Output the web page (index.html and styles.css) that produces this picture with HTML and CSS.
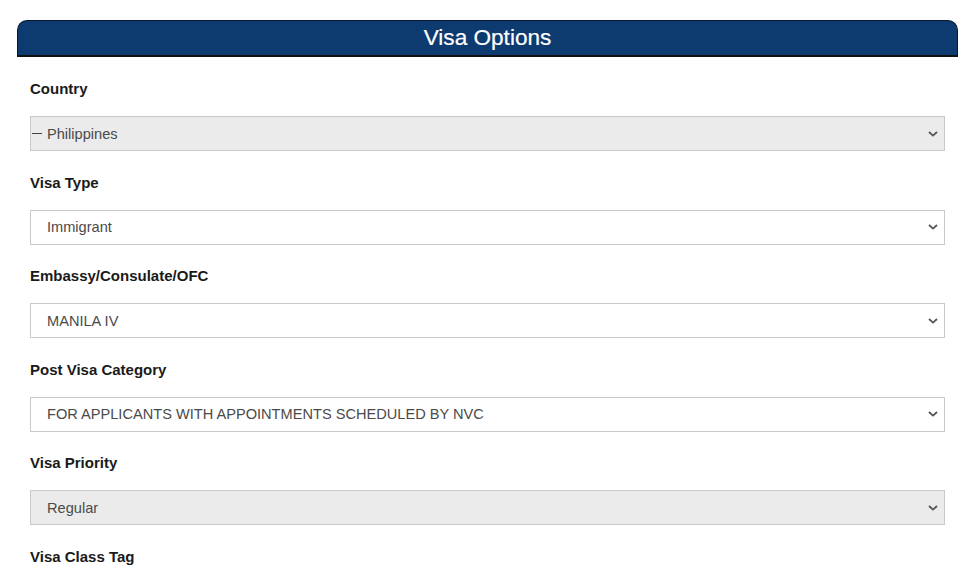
FILE: index.html
```html
<!DOCTYPE html>
<html lang="en">
<head>
<meta charset="utf-8">
<title>Visa Options</title>
<link rel="stylesheet" href="styles.css">
</head>
<body>
<div class="page">
  <div class="panel-head"><h1 class="panel-title">Visa Options</h1></div>
  <form class="form">
    <div class="group">
      <label class="label">Country</label>
      <div class="select disabled">
        <span class="value"><span class="flag"></span>Philippines</span>
        <svg class="chev" viewBox="0 0 10 6" width="10" height="6"><path d="M1 1 L5 4.6 L9 1" fill="none" stroke="#555" stroke-width="1.8"/></svg>
      </div>
    </div>
    <div class="group">
      <label class="label">Visa Type</label>
      <div class="select">
        <span class="value">Immigrant</span>
        <svg class="chev" viewBox="0 0 10 6" width="10" height="6"><path d="M1 1 L5 4.6 L9 1" fill="none" stroke="#555" stroke-width="1.8"/></svg>
      </div>
    </div>
    <div class="group">
      <label class="label">Embassy/Consulate/OFC</label>
      <div class="select">
        <span class="value">MANILA IV</span>
        <svg class="chev" viewBox="0 0 10 6" width="10" height="6"><path d="M1 1 L5 4.6 L9 1" fill="none" stroke="#555" stroke-width="1.8"/></svg>
      </div>
    </div>
    <div class="group">
      <label class="label">Post Visa Category</label>
      <div class="select">
        <span class="value">FOR APPLICANTS WITH APPOINTMENTS SCHEDULED BY NVC</span>
        <svg class="chev" viewBox="0 0 10 6" width="10" height="6"><path d="M1 1 L5 4.6 L9 1" fill="none" stroke="#555" stroke-width="1.8"/></svg>
      </div>
    </div>
    <div class="group">
      <label class="label">Visa Priority</label>
      <div class="select disabled">
        <span class="value">Regular</span>
        <svg class="chev" viewBox="0 0 10 6" width="10" height="6"><path d="M1 1 L5 4.6 L9 1" fill="none" stroke="#555" stroke-width="1.8"/></svg>
      </div>
    </div>
    <div class="group">
      <label class="label">Visa Class Tag</label>
    </div>
  </form>
</div>
</body>
</html>
```
FILE: styles.css
```css
html, body {
  margin: 0;
  padding: 0;
  background: #fff;
}
body {
  font-family: "Liberation Sans", Arial, Helvetica, sans-serif;
  color: #1a1a1a;
}
.page {
  padding: 20px 15px 0 17px;
}
.panel-head {
  background: #0e3b6f;
  border: 1px solid #0a1a2e;
  border-bottom: 2px solid #111;
  border-radius: 10px 10px 0 0;
  height: 34px;
  display: flex;
  align-items: center;
  justify-content: center;
}
.panel-title {
  margin: 0;
  color: #fff;
  font-size: 22.6px;
  font-weight: normal;
  line-height: 34px;
  -webkit-text-stroke: 0.2px #fff;
}
.form {
  padding: 22px 13px 0 13px;
}
.group {
  margin-bottom: 21.5px;
}
.label {
  display: block;
  font-size: 15px;
  font-weight: bold;
  line-height: 20px;
  height: 20px;
  margin-bottom: 17px;
  color: #1a1a1a;
}
.select {
  box-sizing: border-box;
  height: 35px;
  border: 1px solid #c9c9c9;
  background: #fff;
  display: flex;
  align-items: center;
  justify-content: space-between;
  padding: 0 6px 0 16px;
  font-size: 14.6px;
  color: #4a4a4a;
}
.select.disabled {
  background: #ebebeb;
}
.value {
  display: flex;
  align-items: center;
  white-space: nowrap;
}
.flag {
  display: inline-block;
  width: 10px;
  height: 1px;
  background: #444;
  margin-left: -15px;
  margin-right: 5px;
}
.chev {
  display: block;
}
```
